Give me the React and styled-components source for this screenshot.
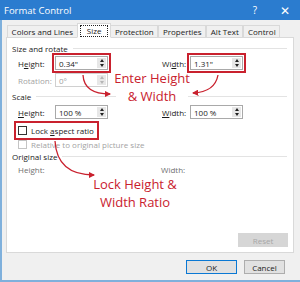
import React from 'react';
import styled, { createGlobalStyle } from 'styled-components';

const GlobalStyle = createGlobalStyle`
  html, body { margin: 0; padding: 0; }
  body {
    width: 300px;
    height: 282px;
    overflow: hidden;
    font-family: 'Open Sans', 'Noto Sans', sans-serif;
  }
`;

const RED = '#c9212e';

const Window = styled.div`
  position: relative;
  width: 300px;
  height: 282px;
  display: flex;
  flex-direction: column;
  background: #f0f0f0;
  color: #1b1b1b;
  font-size: 8px;
`;

const TitleBar = styled.div`
  height: 20px;
  flex: none;
  display: flex;
  align-items: center;
  padding-left: 4px;
  background: #2b7ccf;
  color: #fff;
  font-size: 9.5px;
`;

const Title = styled.div`
  flex: 1;
`;

const TitleButton = styled.div`
  width: 30px;
  text-align: center;
  font-size: ${p => p.$size || 10}px;
`;

const Body = styled.div`
  flex: 1;
  display: flex;
  flex-direction: column;
  border-left: 2px solid #7fb0dc;
  border-bottom: 2px solid #7fb0dc;
`;

const Tabs = styled.div`
  height: 18px;
  display: flex;
  align-items: flex-end;
  padding-left: 5px;
  margin-bottom: -1px;
  position: relative;
  z-index: 1;
`;

const Tab = styled.div`
  height: ${p => (p.$active ? 15 : 13)}px;
  display: flex;
  align-items: center;
  padding: 0 ${p => (p.$active ? 2 : 3.6)}px;
  margin: 0 ${p => (p.$active ? -1 : 0)}px;
  box-sizing: border-box;
  border: 1px solid #d9d9d9;
  border-bottom: ${p => (p.$active ? '1px solid #fff' : '1px solid #d9d9d9')};
  background: ${p => (p.$active ? '#fff' : '#f0f0f0')};
  position: relative;
  z-index: ${p => (p.$active ? 2 : 0)};
`;

const Focus = styled.span`
  border: 1px dotted #222;
  padding: 0 6px;
  line-height: 10px;
`;

const Panel = styled.div`
  margin-left: 4px;
  width: 288px;
  height: 216px;
  box-sizing: border-box;
  background: #fff;
  border: 1px solid #d9d9d9;
  padding: 4px 5px 5px 5px;
  display: flex;
  flex-direction: column;
`;

const Section = styled.div`
  height: 12px;
  display: flex;
  align-items: center;
  margin-top: ${p => p.$top || 0}px;
`;

const Rule = styled.div`
  flex: 1;
  height: 1px;
  background: #e3e3e3;
  margin: 0 1px 0 5px;
`;

const Row = styled.div`
  display: flex;
  align-items: center;
  height: ${p => p.$h || 14}px;
  padding-left: 6px;
  margin-top: ${p => p.$top || 0}px;
`;

const Label = styled.div`
  width: ${p => p.$w || 37}px;
  flex: none;
  color: ${p => (p.$disabled ? '#a3a3a3' : p.$muted ? '#6f6f6f' : '#1b1b1b')};
  margin-left: ${p => p.$left || 0}px;
`;

const Field = styled.div`
  width: 53px;
  height: 14px;
  box-sizing: border-box;
  flex: none;
  display: flex;
  align-items: stretch;
  border: 1px solid ${p => (p.$disabled ? '#d0d0d0' : '#a9a9a9')};
  color: ${p => (p.$disabled ? '#a0a0a0' : '#1b1b1b')};
  outline: ${p => (p.$mark ? `2px solid ${RED}` : 'none')};
  outline-offset: 1px;
`;

const FieldText = styled.div`
  flex: 1;
  display: flex;
  align-items: center;
  padding-left: 3px;
`;

const Spinner = styled.div`
  width: 9px;
  margin: 1px;
  display: flex;
  flex-direction: column;
  background: #e7e7e7;
`;

const Arrow = styled.div`
  flex: 1;
  display: flex;
  align-items: center;
  justify-content: center;
  &::after {
    content: '';
    border-left: 2.5px solid transparent;
    border-right: 2.5px solid transparent;
    ${p => (p.$down ? 'border-top' : 'border-bottom')}: 3px solid ${p => (p.$disabled ? '#b5b5b5' : '#222')};
  }
`;

const Check = styled.label`
  display: flex;
  align-items: center;
  gap: 4px;
  color: ${p => (p.$disabled ? '#a3a3a3' : '#1b1b1b')};
  outline: ${p => (p.$mark ? `2px solid ${RED}` : 'none')};
  outline-offset: 2px;
  padding-right: 1px;
`;

const Box = styled.span`
  width: 9px;
  height: 9px;
  box-sizing: border-box;
  border: 1px solid ${p => (p.$disabled ? '#c4c4c4' : '#333')};
  background: #fff;
`;

const Bottom = styled.div`
  margin-top: auto;
  display: flex;
  justify-content: flex-end;
`;

const Button = styled.div`
  width: ${p => p.$w || 51}px;
  height: 14px;
  box-sizing: border-box;
  display: flex;
  align-items: center;
  justify-content: center;
  background: ${p => (p.$disabled ? '#d6d6d6' : '#e1e1e1')};
  color: ${p => (p.$disabled ? '#a7a7a7' : '#1b1b1b')};
  border: 1px solid ${p => (p.$primary ? '#0a78d4' : p.$disabled ? '#d6d6d6' : '#adadad')};
`;

const Footer = styled.div`
  display: flex;
  justify-content: flex-end;
  gap: 7px;
  padding: 7px 15px 0 0;
`;

const Note = styled.div`
  position: absolute;
  left: ${p => p.$x}px;
  top: ${p => p.$y}px;
  width: ${p => p.$w}px;
  text-align: center;
  color: ${RED};
  font-size: 13px;
  line-height: 18px;
  white-space: nowrap;
`;

const NoteLine = styled.div`
  display: flex;
  justify-content: center;
  & > span {
    background: ${p => (p.$mask ? '#fff' : 'transparent')};
    padding: 0 ${p => (p.$mask ? 12 : 0)}px;
  }
`;

const Overlay = styled.svg`
  position: absolute;
  left: 0;
  top: 0;
  width: 300px;
  height: 282px;
  pointer-events: none;
`;

const NumberField = ({ value, disabled, mark }) => (
  <Field $disabled={disabled} $mark={mark}>
    <FieldText>{value}</FieldText>
    <Spinner>
      <Arrow $disabled={disabled} />
      <Arrow $down $disabled={disabled} />
    </Spinner>
  </Field>
);

export default function App() {
  return (
    <>
      <GlobalStyle />
      <Window>
        <TitleBar>
          <Title>Format Control</Title>
          <TitleButton>?</TitleButton>
          <TitleButton $size={12}>✕</TitleButton>
        </TitleBar>
        <Body>
          <Tabs>
            <Tab>Colors and Lines</Tab>
            <Tab $active><Focus>Size</Focus></Tab>
            <Tab>Protection</Tab>
            <Tab>Properties</Tab>
            <Tab>Alt Text</Tab>
            <Tab>Control</Tab>
          </Tabs>
          <Panel>
            <Section>Size and rotate<Rule /></Section>
            <Row $top={2}>
              <Label>H<u>e</u>ight:</Label>
              <NumberField value={'0.34"'} mark />
              <Label $left={54} $w={28}>Wi<u>d</u>th:</Label>
              <NumberField value={'1.31"'} mark />
            </Row>
            <Row $top={3}>
              <Label $disabled>Rotation:</Label>
              <NumberField value="0°" disabled />
            </Row>
            <Section $top={3}>Scale<Rule /></Section>
            <Row $top={3}>
              <Label><u>H</u>eight:</Label>
              <NumberField value="100 %" />
              <Label $left={54} $w={28}><u>W</u>idth:</Label>
              <NumberField value="100 %" />
            </Row>
            <Row $top={5} $h={12}>
              <Check $mark><Box /><span>Lock <u>a</u>spect ratio</span></Check>
            </Row>
            <Row $top={2} $h={12}>
              <Check $disabled><Box $disabled /><span>Relative to original picture size</span></Check>
            </Row>
            <Section>Original size<Rule /></Section>
            <Row $top={1} $h={12}>
              <Label $muted>Height:</Label>
              <Label $muted $left={106}>Width:</Label>
            </Row>
            <Bottom>
              <Button $w={50} $disabled>Reset</Button>
            </Bottom>
          </Panel>
          <Footer>
            <Button $primary>OK</Button>
            <Button $w={41}>Cancel</Button>
          </Footer>
        </Body>

        <Overlay viewBox="0 0 300 282">
          <defs>
            <marker id="head" viewBox="0 0 6 6" refX="5" refY="3" markerWidth="5" markerHeight="5" orient="auto">
              <path d="M0 0 L6 3 L0 6 Z" fill={RED} />
            </marker>
          </defs>
          <path d="M83 75 Q 84 94 110 94" fill="none" stroke={RED} strokeWidth="1.3" markerEnd="url(#head)" />
          <path d="M218 75 Q 215 92 193 93" fill="none" stroke={RED} strokeWidth="1.3" markerEnd="url(#head)" />
          <path d="M55 141 Q 57 175 94 175" fill="none" stroke={RED} strokeWidth="1.3" markerEnd="url(#head)" />
        </Overlay>
        <Note $x={112} $y={69} $w={80}>
          <NoteLine>Enter Height</NoteLine>
          <NoteLine $mask><span>&amp; Width</span></NoteLine>
        </Note>
        <Note $x={90} $y={175} $w={90}>
          <NoteLine>Lock Height &amp;</NoteLine>
          <NoteLine>Width Ratio</NoteLine>
        </Note>
      </Window>
    </>
  );
}
